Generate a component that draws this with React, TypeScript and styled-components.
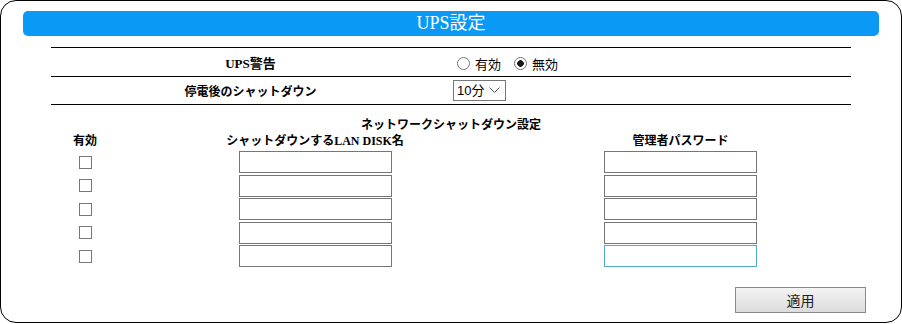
import React from 'react';
import styled, { createGlobalStyle } from 'styled-components';

const GlobalStyle = createGlobalStyle`
  html, body {
    margin: 0;
    padding: 0;
    background: #ffffff;
  }
  * {
    box-sizing: border-box;
  }
`;

const headFont = `"Liberation Serif", "Noto Sans CJK JP", serif`;
const bodyFont = `"Liberation Sans", "Noto Sans CJK JP", sans-serif`;

const Panel = styled.div`
  width: 902px;
  height: 323px;
  border: 1px solid #000;
  border-radius: 16px;
  padding: 10px 22px 0 22px;
  display: flex;
  flex-direction: column;
  background: #fff;
`;

const TitleBar = styled.div`
  height: 25px;
  background: #0a9af5;
  border-radius: 5px;
  color: #fff;
  font-family: ${headFont};
  font-size: 18px;
  line-height: 25px;
  text-align: center;
`;

const Content = styled.div`
  margin: 11px 28px 0 28px;
  display: flex;
  flex-direction: column;
`;

const SettingRow = styled.div<{ $last?: boolean }>`
  display: grid;
  grid-template-columns: 399px 1fr;
  height: 29px;
  border-top: 1px solid #000;
  border-bottom: ${(p) => (p.$last ? '1px solid #000' : 'none')};
  align-items: center;
`;

const Label = styled.div<{ $size?: number }>`
  font-family: ${headFont};
  font-weight: bold;
  font-size: ${(p) => p.$size ?? 12}px;
  text-align: center;
  color: #000;
`;

const Value = styled.div`
  display: flex;
  align-items: center;
  padding-left: 3px;
  font-family: ${bodyFont};
  font-size: 13px;
  color: #000;
`;

const RadioLabel = styled.label`
  display: inline-flex;
  align-items: center;
  gap: 5px;
  margin-right: 9px;
  margin-top: 2px;
`;

const Radio = styled.input.attrs({ type: 'radio' })`
  appearance: none;
  margin: 0 0 0 4px;
  width: 13px;
  height: 13px;
  border: 1px solid #767676;
  border-radius: 50%;
  background: #fff;
  &:checked {
    background: radial-gradient(circle, #1a1a1a 0 3px, #fff 3.6px);
  }
`;

const SelectWrap = styled.div`
  position: relative;
  width: 53px;
  height: 21px;
`;

const Select = styled.select`
  appearance: none;
  width: 100%;
  height: 100%;
  border: 1px solid #767676;
  border-radius: 0;
  background: #fff;
  font-family: ${bodyFont};
  font-size: 13px;
  padding: 0 0 0 3px;
  color: #000;
`;

const Chevron = styled.svg`
  position: absolute;
  right: 6px;
  top: 7px;
  pointer-events: none;
`;

const SectionTitle = styled.div`
  margin-top: 12px;
  font-family: ${headFont};
  font-weight: bold;
  font-size: 12px;
  line-height: 16px;
  text-align: center;
`;

const NetGrid = styled.div`
  display: grid;
  grid-template-columns: 68px 392px 339px;
  row-gap: 1.5px;
  align-items: center;
  justify-items: center;
`;

const ColHead = styled.div`
  font-family: ${headFont};
  font-weight: bold;
  font-size: 12px;
  line-height: 16px;
  margin-bottom: 0.5px;
`;

const Check = styled.input.attrs({ type: 'checkbox' })`
  appearance: none;
  margin: 0;
  width: 13px;
  height: 13px;
  border: 1px solid #767676;
  background: #fff;
`;

const TextField = styled.input<{ $focused?: boolean }>`
  width: 153px;
  height: 22px;
  margin: 0;
  border: 1px solid ${(p) => (p.$focused ? '#4fa9c9' : '#767676')};
  background: #fff;
  outline: none;
  font-family: ${bodyFont};
  font-size: 13px;
`;

const Footer = styled.div`
  display: flex;
  justify-content: flex-end;
  padding-right: 13px;
  margin-top: 20px;
`;

const Button = styled.button`
  width: 131px;
  height: 26px;
  border: 1px solid #8a8a8a;
  border-radius: 0;
  background: linear-gradient(#f4f4f4, #dcdcdc);
  font-family: ${bodyFont};
  font-size: 14px;
  color: #222;
  padding: 0;
`;

const rows = [0, 1, 2, 3, 4];

export default function App() {
  return (
    <>
      <GlobalStyle />
      <Panel>
        <TitleBar>UPS設定</TitleBar>
        <Content>
          <SettingRow>
            <Label $size={13}>UPS警告</Label>
            <Value>
              <RadioLabel>
                <Radio name="ups" />
                有効
              </RadioLabel>
              <RadioLabel>
                <Radio name="ups" defaultChecked />
                無効
              </RadioLabel>
            </Value>
          </SettingRow>
          <SettingRow $last>
            <Label>停電後のシャットダウン</Label>
            <Value>
              <SelectWrap>
                <Select defaultValue="10">
                  <option value="10">10分</option>
                </Select>
                <Chevron width="11" height="7" viewBox="0 0 11 7">
                  <path d="M0.5 0.5 L5.5 5.5 L10.5 0.5" fill="none" stroke="#555" strokeWidth="1" />
                </Chevron>
              </SelectWrap>
            </Value>
          </SettingRow>
          <SectionTitle>ネットワークシャットダウン設定</SectionTitle>
          <NetGrid>
            <ColHead>有効</ColHead>
            <ColHead>シャットダウンするLAN DISK名</ColHead>
            <ColHead>管理者パスワード</ColHead>
            {rows.map((i) => (
              <React.Fragment key={i}>
                <Check />
                <TextField type="text" />
                <TextField type="password" $focused={i === 4} />
              </React.Fragment>
            ))}
          </NetGrid>
        </Content>
        <Footer>
          <Button>適用</Button>
        </Footer>
      </Panel>
    </>
  );
}
